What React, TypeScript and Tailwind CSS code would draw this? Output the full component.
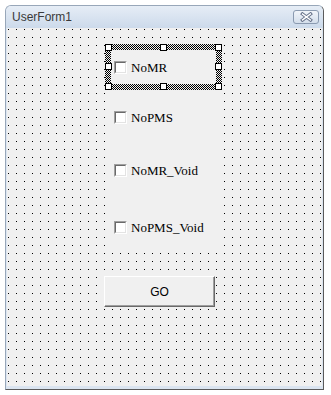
import React from "react";

function Checkbox() {
  return (
    <span className="block w-[13px] h-[13px] border border-t-[#a0a0a0] border-l-[#a0a0a0] border-b-white border-r-white">
      <span className="block w-full h-full border border-t-[#696969] border-l-[#696969] border-b-[#e3e3e3] border-r-[#e3e3e3] bg-white" />
    </span>
  );
}

function CheckItem({ label }: { label: string }) {
  return (
    <div className="flex items-center gap-[4px]">
      <Checkbox />
      <span className="text-[13px] leading-none text-black font-['Liberation_Serif',serif]">{label}</span>
    </div>
  );
}

function Handle({ className }: { className: string }) {
  return <span className={"absolute w-[7px] h-[7px] bg-white border border-black " + className} />;
}

export default function App() {
  return (
    <div className="w-[331px] h-[395px] bg-white pt-[5px] pl-[5px]">
      <div className="w-[319px] h-[385px] flex flex-col rounded-t-[6px] border border-[#98a7b9] border-r-[#5b5b5b] border-b-[#5b5b5b] bg-[#dbe5f1]">
        <div className="h-[22px] shrink-0 flex items-center justify-between pl-[6px] pr-[4px] rounded-t-[5px] bg-gradient-to-b from-[#e6edf6] to-[#ccdaeb]">
          <span className="text-[12px] text-[#3a3a3a] font-['Liberation_Sans',sans-serif]">UserForm1</span>
          <span className="w-[26px] h-[14px] flex items-center justify-center rounded-[3px] border border-[#8a9ab0] bg-gradient-to-b from-[#f1f5fa] to-[#d3deeb]">
            <svg width="13" height="10" viewBox="0 0 13 10">
              <path d="M2.5 2L10.5 8M10.5 2L2.5 8" stroke="#66728a" strokeWidth="3.4" strokeLinecap="square" />
              <path d="M2.5 2L10.5 8M10.5 2L2.5 8" stroke="#ffffff" strokeWidth="1.4" strokeLinecap="square" />
            </svg>
          </span>
        </div>
        <div className="flex-1 mx-[1px] mb-[3px] bg-[#f0f0f0] bg-[conic-gradient(at_1px_1px,transparent_75%,#000_0)] bg-[length:8px_8px] bg-[position:1px_1px] flex flex-col pl-[98px] pt-[16px]">
          <div className="relative w-[117px] h-[46px] p-[6px] bg-[repeating-conic-gradient(#000_0_25%,#f0f0f0_0_50%)] bg-[length:2px_2px]">
            <div className="h-full bg-[#f0f0f0] flex items-center pl-[3px]">
              <CheckItem label="NoMR" />
            </div>
            <Handle className="left-0 top-0" />
            <Handle className="left-[55px] top-0" />
            <Handle className="right-0 top-0" />
            <Handle className="left-0 top-[19px]" />
            <Handle className="right-0 top-[19px]" />
            <Handle className="left-0 bottom-0" />
            <Handle className="left-[55px] bottom-0" />
            <Handle className="right-0 bottom-0" />
          </div>
          <div className="w-[117px] h-[47px] bg-[#f0f0f0] flex items-center pl-[9px] pt-[7px]">
            <CheckItem label="NoPMS" />
          </div>
          <div className="w-[117px] h-[57px] mt-[4px] bg-[#f0f0f0] flex items-center pl-[9px] pt-[1px]">
            <CheckItem label="NoMR_Void" />
          </div>
          <div className="w-[117px] h-[47px] mt-[4px] bg-[#f0f0f0] flex items-center pl-[9px] pt-[3px]">
            <CheckItem label="NoPMS_Void" />
          </div>
          <button className="w-[111px] h-[31px] mt-[27px] -ml-[1px] bg-[#f0f0f0] border border-t-white border-l-white border-r-[#696969] border-b-[#696969] shadow-[inset_-1px_-1px_0_#a0a0a0] text-[12px] text-black font-['Liberation_Sans',sans-serif]">
            GO
          </button>
        </div>
      </div>
    </div>
  );
}
